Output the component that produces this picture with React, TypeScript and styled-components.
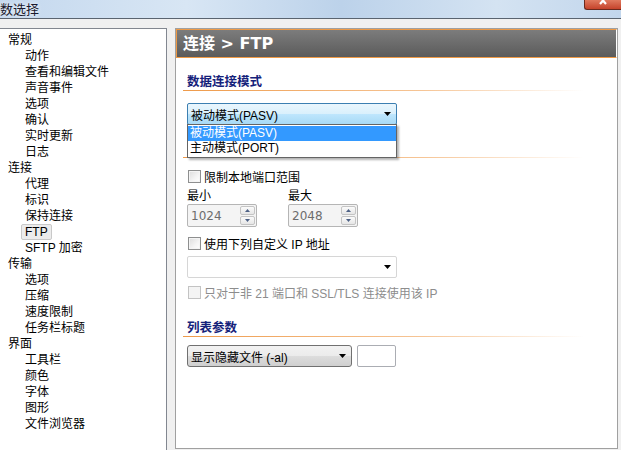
import React from "react";
import styled, { createGlobalStyle } from "styled-components";

const GlobalStyle = createGlobalStyle`
  html, body {
    margin: 0;
    padding: 0;
    background: #f0f0f0;
    overflow: hidden;
  }
  body {
    font-family: "Liberation Sans", "Noto Sans CJK SC", sans-serif;
    font-size: 12px;
    color: #000;
  }
`;

type TreeItem = { label: string; level: number; selected?: boolean };

const tree: TreeItem[] = [
  { label: "常规", level: 0 },
  { label: "动作", level: 1 },
  { label: "查看和编辑文件", level: 1 },
  { label: "声音事件", level: 1 },
  { label: "选项", level: 1 },
  { label: "确认", level: 1 },
  { label: "实时更新", level: 1 },
  { label: "日志", level: 1 },
  { label: "连接", level: 0 },
  { label: "代理", level: 1 },
  { label: "标识", level: 1 },
  { label: "保持连接", level: 1 },
  { label: "FTP", level: 1, selected: true },
  { label: "SFTP 加密", level: 1 },
  { label: "传输", level: 0 },
  { label: "选项", level: 1 },
  { label: "压缩", level: 1 },
  { label: "速度限制", level: 1 },
  { label: "任务栏标题", level: 1 },
  { label: "界面", level: 0 },
  { label: "工具栏", level: 1 },
  { label: "颜色", level: 1 },
  { label: "字体", level: 1 },
  { label: "图形", level: 1 },
  { label: "文件浏览器", level: 1 },
];

const Arrow = () => (
  <svg width="7" height="4" viewBox="0 0 7 4">
    <path d="M0 0 H7 L3.5 4 Z" fill="#000" />
  </svg>
);

const SpinArrows = () => (
  <SpinButtons>
    <SpinBtn>
      <svg width="5" height="3" viewBox="0 0 5 3">
        <path d="M0 3 L2.5 0 L5 3 Z" fill="#4d6185" />
      </svg>
    </SpinBtn>
    <SpinBtn>
      <svg width="5" height="3" viewBox="0 0 5 3">
        <path d="M0 0 L2.5 3 L5 0 Z" fill="#4d6185" />
      </svg>
    </SpinBtn>
  </SpinButtons>
);

const App: React.FC = () => {
  return (
    <>
      <GlobalStyle />
      <Window>
        <TitleBar>
          <TitleText>数选择</TitleText>
          <CloseButton>
            {/* lower half of the close cross, the rest is off screen */}
            <svg width="14" height="8" viewBox="0 0 14 8">
              <path d="M3 -4 L10 4 M11 -4 L4 4" stroke="#fff" strokeWidth="2.2" />
            </svg>
          </CloseButton>
        </TitleBar>
        <Body>
          <TreePanel>
            {tree.map((item, i) => (
              <TreeRow key={i} level={item.level}>
                <TreeLabel selected={item.selected}>{item.label}</TreeLabel>
              </TreeRow>
            ))}
          </TreePanel>
          <Page>
            <PageHeader>连接 &gt; FTP</PageHeader>
            <Content>
              <SectionTitle top={15}>数据连接模式</SectionTitle>
              <ComboWrap>
                <FocusCombo>
                  <span>被动模式(PASV)</span>
                  <Arrow />
                </FocusCombo>
                <DropList>
                  <DropItem active>被动模式(PASV)</DropItem>
                  <DropItem>主动模式(PORT)</DropItem>
                </DropList>
              </ComboWrap>
              <HiddenSection />
              <CheckRow top={10}>
                <CheckBox />
                <span>限制本地端口范围</span>
              </CheckRow>
              <PortRow>
                <PortField>
                  <PortLabel>最小</PortLabel>
                  <SpinBox>
                    <SpinValue>1024</SpinValue>
                    <SpinArrows />
                  </SpinBox>
                </PortField>
                <PortField>
                  <PortLabel>最大</PortLabel>
                  <SpinBox>
                    <SpinValue>2048</SpinValue>
                    <SpinArrows />
                  </SpinBox>
                </PortField>
              </PortRow>
              <CheckRow top={8}>
                <CheckBox />
                <span>使用下列自定义 IP 地址</span>
              </CheckRow>
              <PlainCombo>
                <span />
                <Arrow />
              </PlainCombo>
              <CheckRow top={6} disabled>
                <CheckBox disabled />
                <span>只对于非 21 端口和 SSL/TLS 连接使用该 IP</span>
              </CheckRow>
              <SectionTitle top={19}>列表参数</SectionTitle>
              <ListRow>
                <ButtonCombo>
                  <span>显示隐藏文件 (-al)</span>
                  <Arrow />
                </ButtonCombo>
                <TextBox />
              </ListRow>
            </Content>
          </Page>
        </Body>
      </Window>
    </>
  );
};

export default App;

const Window = styled.div`
  width: 621px;
  height: 450px;
  display: flex;
  flex-direction: column;
  background: #f0f0f0;
`;

const TitleBar = styled.div`
  height: 18px;
  border-bottom: 1px solid #5a6470;
  background: linear-gradient(90deg, #c4d8ee 0%, #d8e6f4 30%, #bcd2ea 55%, #d4e3f2 80%, #c2d6ec 100%);
  display: flex;
  align-items: flex-start;
  justify-content: space-between;
  overflow: hidden;
`;

const TitleText = styled.div`
  margin-left: 0;
  font-family: "Noto Sans CJK SC", sans-serif;
  font-size: 13px;
  line-height: 17px;
  color: #1a1a2e;
  text-shadow: 0 0 4px #ffffff;
`;

const CloseButton = styled.div`
  width: 36px;
  height: 9px;
  background: linear-gradient(#e07a5f, #c5432b);
  border: 1px solid #6b2a1e;
  border-top: none;
  border-right: none;
  border-radius: 0 0 0 3px;
  display: flex;
  justify-content: center;
  align-items: flex-start;
  overflow: hidden;
`;

const Body = styled.div`
  flex: 1;
  display: flex;
  padding-top: 9px;
  gap: 8px;
`;

const TreePanel = styled.div`
  width: 167px;
  background: #fff;
  border-top: 1px solid #828790;
  border-right: 1px solid #828790;
  padding-top: 3px;
  box-sizing: border-box;
`;

const TreeRow = styled.div<{ level: number }>`
  height: 16px;
  display: flex;
  align-items: center;
  padding-left: ${(p) => (p.level === 0 ? 4 : 21)}px;
`;

const TreeLabel = styled.span<{ selected?: boolean }>`
  font-family: "Liberation Sans", "Noto Sans CJK SC", sans-serif;
  font-size: 12px;
  line-height: 14px;
  padding: 0 3px;
  border: 1px solid ${(p) => (p.selected ? "#c9c9c9" : "transparent")};
  border-radius: 2px;
  background: ${(p) => (p.selected ? "#ececec" : "transparent")};
`;

const Page = styled.div`
  width: 443px;
  height: 421px;
  background: #fff;
  border: 1px solid #a0a0a0;
  box-sizing: border-box;
  display: flex;
  flex-direction: column;
`;

const PageHeader = styled.div`
  height: 29px;
  box-sizing: border-box;
  border: 1px solid #ef9a45;
  border-right-color: #ffffff;
  background: linear-gradient(#7c7c7c, #5b5b5b);
  color: #fff;
  font-family: "DejaVu Sans", "Noto Sans CJK SC", sans-serif;
  font-weight: bold;
  font-size: 16px;
  line-height: 27px;
  padding-left: 6px;
`;

const Content = styled.div`
  padding-left: 11px;
  display: flex;
  flex-direction: column;
`;

const SectionTitle = styled.div<{ top: number }>`
  margin-top: ${(p) => p.top}px;
  margin-left: -4px;
  padding-left: 4px;
  width: 396px;
  height: 17px;
  line-height: 16px;
  font-family: "Noto Sans CJK SC", sans-serif;
  font-weight: bold;
  font-size: 12.5px;
  color: #14217a;
  border-bottom: 1px solid;
  border-image: linear-gradient(90deg, #ee9a4a 0%, #f6c596 60%, #ffffff 100%) 1;
`;

const HiddenSection = styled.div`
  margin-top: 15px;
  margin-left: -4px;
  width: 400px;
  height: 17px;
  border-bottom: 1px solid;
  border-image: linear-gradient(90deg, #ee9a4a 0%, #f6c596 60%, #ffffff 100%) 1;
`;

const ComboWrap = styled.div`
  position: relative;
  margin-top: 12px;
  width: 210px;
  z-index: 2;
`;

const comboBase = `
  width: 210px;
  height: 22px;
  box-sizing: border-box;
  display: flex;
  align-items: center;
  justify-content: space-between;
  padding: 0 5px 0 3px;
  font-family: "Liberation Sans", "Noto Sans CJK SC", sans-serif;
  font-size: 12px;
`;

const FocusCombo = styled.div`
  ${comboBase}
  border: 1px solid #3c7fb1;
  border-radius: 2px;
  background: linear-gradient(#eaf6fd 0%, #d9f0fc 50%, #bee6fd 51%, #a7d9f5 100%);
`;

const DropList = styled.div`
  position: absolute;
  top: 21px;
  left: 0;
  width: 210px;
  box-sizing: border-box;
  background: #fff;
  border: 1px solid #646464;
  box-shadow: 2px 2px 2px rgba(0, 0, 0, 0.3);
  padding: 1px 0;
`;

const DropItem = styled.div<{ active?: boolean }>`
  height: 15px;
  line-height: 15px;
  padding-left: 2px;
  font-family: "Liberation Sans", "Noto Sans CJK SC", sans-serif;
  font-size: 12px;
  background: ${(p) => (p.active ? "#3399ff" : "#fff")};
  color: ${(p) => (p.active ? "#fff" : "#000")};
`;

const CheckRow = styled.div<{ top: number; disabled?: boolean }>`
  margin-top: ${(p) => p.top}px;
  height: 16px;
  display: flex;
  align-items: center;
  gap: 3px;
  padding-left: 1px;
  font-family: "Liberation Sans", "Noto Sans CJK SC", sans-serif;
  font-size: 12px;
  color: ${(p) => (p.disabled ? "#8d8d8d" : "#000")};
`;

const CheckBox = styled.div<{ disabled?: boolean }>`
  width: 13px;
  height: 13px;
  box-sizing: border-box;
  border: 1px solid ${(p) => (p.disabled ? "#c3c3c3" : "#8e8f8f")};
  background: ${(p) =>
    p.disabled
      ? "#f4f4f4"
      : "linear-gradient(135deg, #dcdcdc 0%, #f4f4f4 60%, #ffffff 100%)"};
  box-shadow: inset 0 0 0 1px #f4f4f4;
`;

const PortRow = styled.div`
  margin-top: 3px;
  display: flex;
  gap: 31px;
`;

const PortField = styled.div`
  display: flex;
  flex-direction: column;
`;

const PortLabel = styled.div`
  height: 17px;
  line-height: 16px;
  font-family: "Noto Sans CJK SC", sans-serif;
  font-size: 12px;
`;

const SpinBox = styled.div`
  width: 70px;
  height: 23px;
  box-sizing: border-box;
  border: 1px solid #b5b5b5;
  border-radius: 2px;
  background: #f4f4f4;
  display: flex;
  align-items: center;
  justify-content: space-between;
  padding: 1px;
`;

const SpinValue = styled.span`
  padding-left: 2px;
  font-family: "DejaVu Sans", sans-serif;
  font-size: 12px;
  color: #6d6d6d;
`;

const SpinButtons = styled.div`
  width: 15px;
  height: 19px;
  display: flex;
  flex-direction: column;
  gap: 1px;
`;

const SpinBtn = styled.div`
  flex: 1;
  border: 1px solid #c4c4c4;
  border-radius: 2px;
  background: linear-gradient(#fbfbfb, #e6e6e6);
  display: flex;
  align-items: center;
  justify-content: center;
`;

const PlainCombo = styled.div`
  ${comboBase}
  margin-top: 5px;
  border: 1px solid #d6d6d6;
  border-radius: 2px;
  background: #fff;
`;

const ListRow = styled.div`
  margin-top: 8px;
  display: flex;
  gap: 5px;
`;

const ButtonCombo = styled.div`
  ${comboBase}
  width: 165px;
  border: 1px solid #707070;
  border-radius: 3px;
  background: linear-gradient(#f2f2f2 0%, #ebebeb 50%, #dddddd 51%, #cfcfcf 100%);
`;

const TextBox = styled.div`
  width: 39px;
  height: 22px;
  box-sizing: border-box;
  border: 1px solid #abadb3;
  border-radius: 2px;
  background: #fff;
`;
